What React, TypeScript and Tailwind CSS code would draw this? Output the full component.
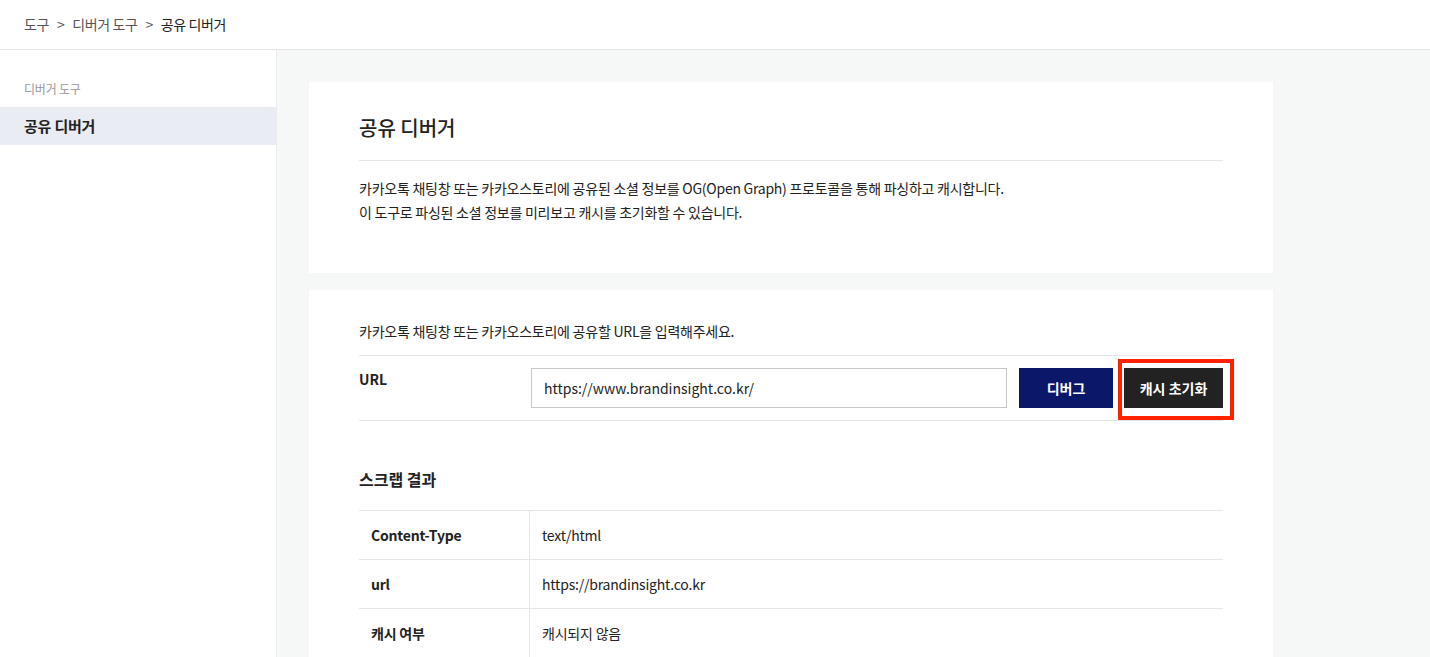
import React from 'react'

const font = { fontFamily: '"Noto Sans CJK KR", "Noto Sans", sans-serif' }

const rows = [
  { label: 'Content-Type', value: 'text/html' },
  { label: 'url', value: 'https://brandinsight.co.kr' },
  { label: '캐시 여부', value: '캐시되지 않음' }
]

export default function App() {
  return (
    <div className="min-h-screen bg-white text-[#222]" style={font}>
      {/* 상단 경로 */}
      <header className="h-[50px] border-b border-[#e5e5e5] flex items-center pl-6 text-[14px] tracking-[-0.4px] text-[#555]">
        <span>도구</span>
        <span className="mx-2">&gt;</span>
        <span>디버거 도구</span>
        <span className="mx-2">&gt;</span>
        <span className="text-[#222]">공유 디버거</span>
      </header>

      <div className="flex">
        {/* 사이드바 */}
        <aside className="w-[277px] shrink-0 border-r border-[#ebebeb] min-h-[608px] pt-[30px]">
          <div className="pl-6 text-[12px] leading-[18px] text-[#999] tracking-[-0.2px]">디버거 도구</div>
          <div className="mt-[9px] h-[38px] bg-[#e9ecf3] pl-6 flex items-center text-[15px] font-bold tracking-[-0.2px]">
            공유 디버거
          </div>
        </aside>

        {/* 본문 */}
        <main className="flex-1 bg-[#f6f7f7] pl-8 pt-8">
          <section className="w-[964px] bg-white px-[50px] pt-[31px] pb-[49px]">
            <h1 className="text-[20px] leading-[30px] font-medium">공유 디버거</h1>
            <div className="mt-[17px] border-t border-[#e5e5e5] pt-[15px] text-[14px] leading-6 tracking-[-0.25px]">
              <p>카카오톡 채팅창 또는 카카오스토리에 공유된 소셜 정보를 OG(Open Graph) 프로토콜을 통해 파싱하고 캐시합니다.</p>
              <p>이 도구로 파싱된 소셜 정보를 미리보고 캐시를 초기화할 수 있습니다.</p>
            </div>
          </section>

          <section className="mt-[17px] w-[964px] bg-white px-[50px] pt-[29px] pb-10">
            <p className="text-[14px] leading-6 tracking-[-0.25px]">카카오톡 채팅창 또는 카카오스토리에 공유할 URL을 입력해주세요.</p>
            <div className="mt-3 border-y border-[#e5e5e5] py-3 flex items-start">
              <div className="w-[172px] pt-[1px] text-[14px] font-bold leading-[20px]">URL</div>
              <input
                className="w-[476px] h-10 border border-[#c8c8c8] px-3 text-[14px] outline-none"
                defaultValue="https://www.brandinsight.co.kr/"
              />
              <button className="ml-3 w-[94px] h-10 bg-[#0b186a] text-white text-[14px] font-bold">디버그</button>
              <div className="relative ml-[11px]">
                <button className="w-[99px] h-10 bg-[#222] text-white text-[14px] font-bold">캐시 초기화</button>
                <div className="absolute -left-[6px] -right-[11px] -top-[9px] -bottom-[12px] border-4 border-[#ff2200] pointer-events-none" />
              </div>
            </div>

            <h2 className="mt-[46px] text-[16px] leading-6 font-bold">스크랩 결과</h2>
            <div className="mt-[19px] border-b border-[#e5e5e5]">
              {rows.map((row) => (
                <div key={row.label} className="flex h-[49px] border-t border-[#e5e5e5] text-[14px] tracking-[-0.2px]">
                  <div className="w-[171px] border-r border-[#e5e5e5] pl-3 flex items-center font-bold">{row.label}</div>
                  <div className="pl-3 flex items-center">{row.value}</div>
                </div>
              ))}
            </div>
          </section>
        </main>
      </div>
    </div>
  )
}
